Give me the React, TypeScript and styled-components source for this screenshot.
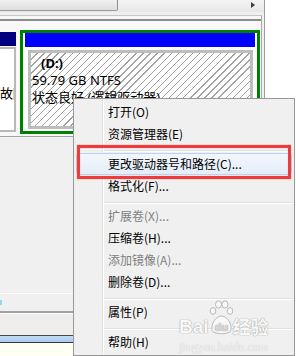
import React from "react";
import styled, { createGlobalStyle } from "styled-components";

const GlobalStyle = createGlobalStyle`
  html, body {
    margin: 0;
    padding: 0;
    background: #fff;
  }
  * {
    box-sizing: border-box;
  }
`;

const Screen = styled.div`
  position: relative;
  width: 296px;
  height: 356px;
  overflow: hidden;
  display: grid;
  grid-template-columns: 265px 1fr;
  background: #fff;
  font-family: "Noto Sans", "Noto Sans CJK SC", sans-serif;
  font-size: 12px;
  color: #000;
`;

const Panel = styled.div`
  display: flex;
  flex-direction: column;
  border-right: 1px solid #9c9c9c;
  background: #f0f0f0;
`;

const ScrollTrack = styled.div`
  height: 12px;
  flex: none;
  display: flex;
  justify-content: space-between;
  align-items: flex-start;
  padding-right: 9px;
  background: linear-gradient(#f4f4f4, #e7e7e7);
`;

const Thumb = styled.div`
  width: 118px;
  height: 11px;
  border-right: 1px solid #8f8f8f;
  border-bottom: 1px solid #9a9a9a;
  border-bottom-right-radius: 2px;
  background: linear-gradient(#f1f1f1, #dedede);
`;

const Arrow = styled.div`
  margin-top: 2px;
  width: 0;
  height: 0;
  border-top: 3.5px solid transparent;
  border-bottom: 3.5px solid transparent;
  border-left: 4px solid #3c3c3c;
`;

const Frame = styled.div`
  flex: 1;
  display: flex;
  flex-direction: column;
  margin: 3px 2px 0 0;
  border-top: 1px solid #c6c6c6;
  border-right: 1px solid #a9a9a9;
  background: #f7f7f7;
`;

const DiskPane = styled.div`
  flex: none;
  margin-top: 3px;
  padding: 9px 0 2px;
  border-top: 2px solid #8c8c8c;
  border-bottom: 1px solid #a3a3a3;
  background: #f8f8f8;
`;

const DiskRow = styled.div`
  display: flex;
  align-items: flex-start;
  height: 104px;
`;

const Partition = styled.div`
  width: 16px;
  height: 100px;
  margin-top: 2px;
  display: flex;
  flex-direction: column;
  overflow: hidden;
`;

const Header = styled.div<{ $color: string }>`
  flex: none;
  height: 14px;
  background: ${(p) => p.$color};
`;

const PartBody = styled.div`
  flex: 1;
  margin-top: 1px;
  padding-top: 36px;
  border: 2px solid #b9b9b9;
  border-left: none;
  background: #fff;
  font-size: 13px;
  line-height: 17px;
  white-space: nowrap;
  overflow: hidden;
`;

const Extended = styled.div`
  width: 240px;
  height: 104px;
  margin-left: 4px;
  display: flex;
  flex-direction: column;
  border: 3px solid #008000;
  background: #fff;
`;

const BlueBar = styled(Header)`
  margin: 0 2px;
`;

const Hatch = styled.div`
  flex: 1;
  margin: 3px 4px 2px 5px;
  padding: 2px 0 0 1px;
  border: 3px solid #bdbdbd;
  background: repeating-linear-gradient(
    135deg,
    #ffffff 0px,
    #ffffff 4px,
    #a3a3a3 4px,
    #a3a3a3 5px
  );
  font-size: 13px;
  line-height: 17px;
  white-space: nowrap;
  overflow: hidden;
`;

const Line = styled.div<{ $bold?: boolean; $indent?: number }>`
  font-weight: ${(p) => (p.$bold ? 700 : 400)};
  padding-left: ${(p) => p.$indent ?? 0}px;
`;

const LowerPane = styled.div`
  flex: 1;
  background: #f0f0f0;
`;

const Legend = styled.div`
  flex: none;
  height: 20px;
  display: flex;
  align-items: center;
  border-top: 1px solid #fff;
  border-bottom: 2px solid #a2a2a2;
  background: #f0f0f0;
`;

const Swatch = styled.div`
  width: 2px;
  height: 5px;
  background: #8fd8f0;
`;

const StatusArea = styled.div`
  flex: none;
  height: 22px;
  border-top: 1px solid #fff;
  background: #f0eded;
`;

const TaskStrip = styled.div`
  flex: none;
  height: 8px;
  border-top: 1px solid #4a4a4a;
  border-bottom: 1px solid #3a3a3a;
  background: linear-gradient(#c4dcf4, #a9cbee);
`;

const Cream = styled.div`
  flex: none;
  height: 13px;
  background: #fffff4;
`;

const Menu = styled.div`
  position: absolute;
  left: 73px;
  top: 98px;
  width: 222px;
  height: 258px;
  padding: 2px;
  border: 1px solid #979797;
  background: linear-gradient(
      to right,
      transparent 28px,
      #e2e3e3 28px,
      #e2e3e3 29px,
      #ffffff 29px,
      #ffffff 30px,
      transparent 30px
    ),
    #f0f0f0;
  font-family: "Noto Sans CJK SC", sans-serif;
  font-size: 12px;
`;

const Item = styled.div<{ $disabled?: boolean; $active?: boolean }>`
  position: relative;
  height: 22px;
  line-height: 20px;
  padding-left: 31px;
  border: 1px solid ${(p) => (p.$active ? "#b5d3f6" : "transparent")};
  border-radius: 3px;
  background: ${(p) =>
    p.$active ? "linear-gradient(#f3f7fc, #e4edf9)" : "transparent"};
  color: ${(p) => (p.$disabled ? "#808080" : "#000")};
  white-space: nowrap;

  ${(p) =>
    p.$active &&
    `
    &::after {
      content: "";
      position: absolute;
      top: -9px;
      bottom: -5px;
      left: 0;
      right: 0;
      border: 3px solid #ee3c3c;
      box-shadow: 0 0 1px #f37070, inset 0 0 1px #f37070;
    }
  `}
`;

const Separator = styled.div`
  height: 8px;
  margin-left: 28px;
  background: linear-gradient(
    to bottom,
    transparent 5px,
    #e0e0e0 5px,
    #e0e0e0 6px,
    #ffffff 6px,
    #ffffff 7px,
    transparent 7px
  );
`;

const Watermark = styled.div`
  position: absolute;
  left: 179px;
  top: 300px;
  display: flex;
  flex-direction: column;
  align-items: flex-start;
  color: #f8f8f8;
  text-shadow: 0 0 1px #9f9f9f, 0 0 1px #9f9f9f;
  pointer-events: none;
`;

const MarkRow = styled.div`
  display: flex;
  align-items: flex-end;
  height: 36px;
`;

const Bai = styled.span`
  font-family: "Liberation Sans", sans-serif;
  font-weight: 700;
  font-size: 19px;
  line-height: 19px;
`;

const Jingyan = styled.span`
  font-family: "Noto Sans CJK SC", sans-serif;
  font-weight: 700;
  font-size: 18px;
  line-height: 19px;
`;

const Url = styled.span`
  margin-top: 5px;
  font-family: "Liberation Serif", serif;
  font-size: 12px;
  line-height: 12px;
  color: #f6f6f6;
  text-shadow: 0 0 1px #b3b3b3;
`;

const Paw = () => (
  <svg width="24" height="36" viewBox="0 0 24 36">
    <g fill="#f8f8f8" stroke="#a9a9a9" strokeWidth="0.8">
      <ellipse cx="4" cy="11" rx="2.8" ry="3.4" />
      <ellipse cx="9.5" cy="4.5" rx="3" ry="3.6" />
      <ellipse cx="16" cy="4.5" rx="3" ry="3.6" />
      <ellipse cx="21" cy="11" rx="2.8" ry="3.4" />
      <path d="M3 30 C2 22 8 16 12.5 16 C17 16 23 22 22 30 C21 35 4 35 3 30 Z" />
    </g>
    <text
      x="12.5"
      y="31"
      textAnchor="middle"
      fontFamily="Liberation Sans, sans-serif"
      fontWeight="700"
      fontSize="11"
      fill="#dcdcdc"
    >
      du
    </text>
  </svg>
);

type Entry = { label: string; disabled?: boolean; active?: boolean } | "sep";

const entries: Entry[] = [
  { label: "打开(O)" },
  { label: "资源管理器(E)" },
  "sep",
  { label: "更改驱动器号和路径(C)...", active: true },
  { label: "格式化(F)..." },
  "sep",
  { label: "扩展卷(X)...", disabled: true },
  { label: "压缩卷(H)..." },
  { label: "添加镜像(A)...", disabled: true },
  { label: "删除卷(D)..." },
  "sep",
  { label: "属性(P)" },
  "sep",
  { label: "帮助(H)" },
];

export default function App() {
  return (
    <>
      <GlobalStyle />
      <Screen>
        <Panel>
          <ScrollTrack>
            <Thumb />
            <Arrow />
          </ScrollTrack>
          <Frame>
            <DiskPane>
              <DiskRow>
                <Partition>
                  <Header $color="#000080" />
                  <PartBody>故障转储</PartBody>
                </Partition>
                <Extended>
                  <BlueBar $color="#0000ff" />
                  <Hatch>
                    <Line $bold $indent={9}>
                      (D:)
                    </Line>
                    <Line>59.79 GB NTFS</Line>
                    <Line>状态良好 (逻辑驱动器)</Line>
                  </Hatch>
                </Extended>
              </DiskRow>
            </DiskPane>
            <LowerPane />
            <Legend>
              <Swatch />
            </Legend>
            <StatusArea />
            <TaskStrip />
            <Cream />
          </Frame>
        </Panel>
        <div />

        <Menu>
          {entries.map((e, i) =>
            e === "sep" ? (
              <Separator key={i} />
            ) : (
              <Item key={i} $disabled={e.disabled} $active={e.active}>
                {e.label}
              </Item>
            )
          )}
        </Menu>

        <Watermark>
          <MarkRow>
            <Bai>Bai</Bai>
            <Paw />
            <Jingyan>经验</Jingyan>
          </MarkRow>
          <Url>jingyan.baidu.com</Url>
        </Watermark>
      </Screen>
    </>
  );
}
